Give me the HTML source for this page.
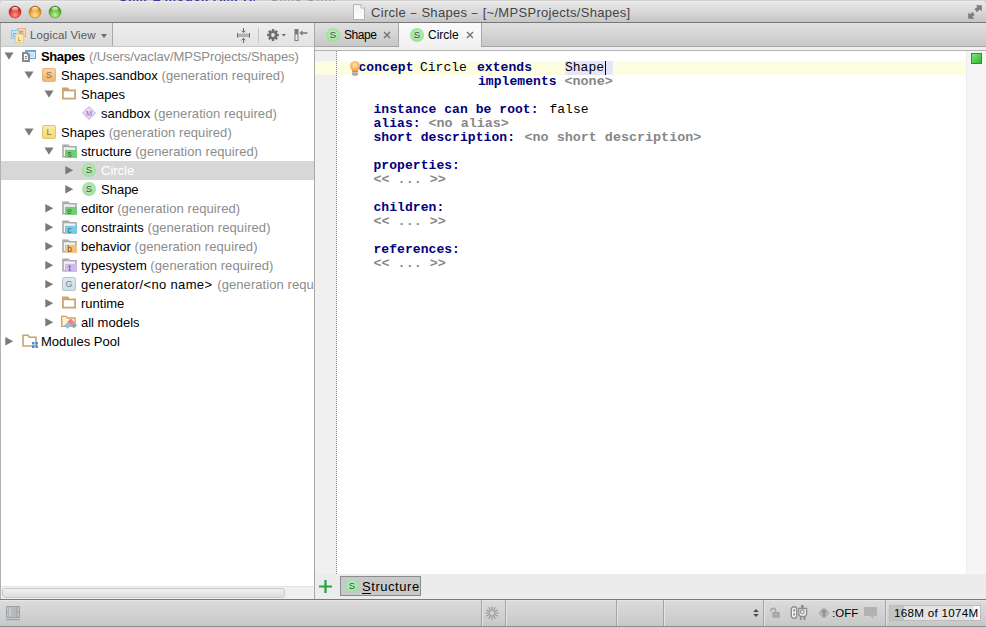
<!DOCTYPE html><html><head><meta charset="utf-8"><style>
*{margin:0;padding:0;box-sizing:border-box}
html,body{width:986px;height:627px;overflow:hidden;background:#fff}
body{position:relative;font-family:"Liberation Sans",sans-serif;font-size:13px;color:#000}
div,span,svg{position:absolute}
.nw{white-space:nowrap}
.g{color:#8c8c8c;letter-spacing:0.08px}
.code{font-family:"Liberation Mono",monospace;font-size:13px;white-space:pre;line-height:14px}
.kw{color:#000080;font-weight:bold;letter-spacing:0.06px}
.gr{color:#878787;font-weight:bold;font-size:13.4px}
.bk{color:#000}
.sc{width:14px;height:14px;border-radius:50%;background:radial-gradient(circle at 50% 45%,#c4f2c4,#95dd98 80%,#86d08a)}
.sc i{position:absolute;left:0;top:0;width:14px;height:14px;line-height:14px;text-align:center;font-style:normal;font-size:9.5px;color:#3e4a3e}
</style></head><body>
<div style="left:0;top:0;width:986px;height:22px;background:linear-gradient(#ebebeb,#d9d9d9 50%,#c6c6c6)"></div>
<div style="left:0;top:22px;width:986px;height:1px;background:#777"></div>
<div style="left:0;top:0;width:986px;height:1px;background:#d0d0d0"></div>
<div style="left:0;top:1px;width:986px;height:1px;background:#eeeeee"></div>
<svg style="left:8px;top:5px" width="14" height="14" viewBox="0 0 14 14"><defs><radialGradient id="tl0" cx="0.5" cy="0.75" r="0.65"><stop offset="0" stop-color="#ff9a90"/><stop offset="0.6" stop-color="#e8463c"/><stop offset="1" stop-color="#a51d14"/></radialGradient><linearGradient id="th0" x1="0" y1="0" x2="0" y2="1"><stop offset="0" stop-color="#fff" stop-opacity="0.95"/><stop offset="1" stop-color="#fff" stop-opacity="0"/></linearGradient></defs><circle cx="7" cy="7" r="6" fill="url(#tl0)" stroke="#a51d14" stroke-width="0.5"/><ellipse cx="7" cy="4.3" rx="3.3" ry="2.2" fill="url(#th0)"/></svg>
<svg style="left:28px;top:5px" width="14" height="14" viewBox="0 0 14 14"><defs><radialGradient id="tl1" cx="0.5" cy="0.75" r="0.65"><stop offset="0" stop-color="#ffe39a"/><stop offset="0.6" stop-color="#f1a935"/><stop offset="1" stop-color="#b36f0c"/></radialGradient><linearGradient id="th1" x1="0" y1="0" x2="0" y2="1"><stop offset="0" stop-color="#fff" stop-opacity="0.95"/><stop offset="1" stop-color="#fff" stop-opacity="0"/></linearGradient></defs><circle cx="7" cy="7" r="6" fill="url(#tl1)" stroke="#b36f0c" stroke-width="0.5"/><ellipse cx="7" cy="4.3" rx="3.3" ry="2.2" fill="url(#th1)"/></svg>
<svg style="left:48px;top:5px" width="14" height="14" viewBox="0 0 14 14"><defs><radialGradient id="tl2" cx="0.5" cy="0.75" r="0.65"><stop offset="0" stop-color="#c8f29a"/><stop offset="0.6" stop-color="#6cc23f"/><stop offset="1" stop-color="#3a8a1c"/></radialGradient><linearGradient id="th2" x1="0" y1="0" x2="0" y2="1"><stop offset="0" stop-color="#fff" stop-opacity="0.95"/><stop offset="1" stop-color="#fff" stop-opacity="0"/></linearGradient></defs><circle cx="7" cy="7" r="6" fill="url(#tl2)" stroke="#3a8a1c" stroke-width="0.5"/><ellipse cx="7" cy="4.3" rx="3.3" ry="2.2" fill="url(#th2)"/></svg>
<svg style="left:0;top:0" width="6" height="6" viewBox="0 0 6 6"><path d="M0 0h6C2.5 0 0 2.5 0 6z" fill="#d4d4d4"/></svg>
<svg style="left:980px;top:0" width="6" height="6" viewBox="0 0 6 6"><path d="M6 0H0c3.5 0 6 2.5 6 6z" fill="#d4d4d4"/></svg>
<div style="left:119px;top:0;width:136px;height:2px;overflow:hidden;opacity:0.85"><div class="nw" style="left:0;top:-11px;font-size:13px;font-weight:bold;color:#20208a;letter-spacing:0.4px">SIMPL modelPAMPHM6</div></div>
<div style="left:270px;top:0;width:70px;height:2px;overflow:hidden;opacity:0.85"><div class="nw" style="left:0;top:-11px;font-size:13px;color:#8a8a8a;letter-spacing:0.8px">Sims SIMPL md6</div></div>
<svg style="left:352px;top:3px" width="14" height="18" viewBox="0 0 14 18"><defs><linearGradient id="dg" x1="0" y1="0" x2="0" y2="1"><stop offset="0" stop-color="#f2f2f2"/><stop offset="1" stop-color="#ffffff"/></linearGradient></defs><path d="M1.5 1.5h7.5l3.5 3.5v11.5h-11z" fill="url(#dg)" stroke="#b4b4b4"/><path d="M9 1.5v3.5h3.5" fill="#fff" stroke="#b4b4b4"/></svg>
<div class="nw" style="left:371px;top:5px;font-size:13px;letter-spacing:0.3px;color:#444">Circle <span style="position:relative;display:inline-block;transform:scaleX(0.78)">–</span> Shapes <span style="position:relative;display:inline-block;transform:scaleX(0.78)">–</span> [~/MPSProjects/Shapes]</div>
<svg style="left:967px;top:4px" width="16" height="16" viewBox="0 0 16 16"><path d="M8.6 1.2h6.2v6.2l-2-2-2.2 2.2c-.8.8-2 .3-1.6-.8l.4-.9-.5.2c-1 .4-1.6-.7-.8-1.5l2.5-1.5z" fill="#7c7c7c"/><path d="M1.2 8.6v6.2h6.2l-2-2 1.8-1.6c.8-.8.2-1.9-.8-1.5l-.6.3.3-.7c.4-1-.7-1.5-1.5-.7L3.2 10.6z" fill="#7c7c7c"/></svg>
<div style="left:0;top:23px;width:1px;height:577px;background:#b2b2b2"></div>
<div style="left:1px;top:23px;width:313px;height:24px;background:linear-gradient(#eeeeee,#e3e3e3);border-bottom:1px solid #c8c8c8"></div>
<div style="left:1px;top:23px;width:111px;height:23px;background:linear-gradient(#e4e4e4,#d9d9d9)"></div>
<div style="left:112px;top:23px;width:1px;height:23px;background:#aaaaaa"></div>
<svg style="left:10px;top:27px" width="17" height="17" viewBox="0 0 17 17"><rect x="7.5" y="1.5" width="8" height="8" fill="#f8d2a8" stroke="#ecb27a"/><text x="11.5" y="7.8" font-size="6" text-anchor="middle" fill="#8a6a4a" font-family="Liberation Sans">S</text><rect x="1.5" y="3.5" width="8" height="8" fill="#c4e4f8" stroke="#8cc6ea"/><text x="5" y="9.5" font-size="6" text-anchor="middle" fill="#6a8aa0" font-family="Liberation Sans">D</text><rect x="5.5" y="7.5" width="8" height="8" fill="#faeab0" stroke="#e8cf7a"/><text x="9.5" y="14" font-size="6" text-anchor="middle" fill="#8a7a4a" font-family="Liberation Sans">L</text></svg>
<div class="nw" style="left:30px;top:29px;color:#5a5a5a;font-size:11.5px;letter-spacing:0.1px">Logical View</div>
<div style="left:101px;top:34px;width:0;height:0;border-left:3.5px solid transparent;border-right:3.5px solid transparent;border-top:4px solid #6a6a6a"></div>
<svg style="left:237px;top:28px" width="13" height="15" viewBox="0 0 13 15"><rect x="0.5" y="5.5" width="12" height="3.6" fill="#b4b4b4"/><path d="M0.5 5v4.6M12.5 5v4.6" stroke="#6a6a6a" stroke-width="1"/><path d="M6.5 0v4.2M6.5 10.4v4.6" stroke="#6a6a6a" stroke-width="1"/><path d="M4.5 2.6l2 2 2-2M4.5 12.4l2-2 2 2" stroke="#6a6a6a" fill="none" stroke-width="1"/></svg>
<div style="left:258px;top:28px;width:1px;height:15px;background:#c4c4c4"></div>
<svg style="left:267px;top:29px" width="20" height="12" viewBox="0 0 20 12"><path d="M10.08 4.65 L11.88 4.81 L11.88 7.19 L10.08 7.35 L9.84 7.93 L11.00 9.32 L9.32 11.00 L7.93 9.84 L7.35 10.08 L7.19 11.88 L4.81 11.88 L4.65 10.08 L4.07 9.84 L2.68 11.00 L1.00 9.32 L2.16 7.93 L1.92 7.35 L0.12 7.19 L0.12 4.81 L1.92 4.65 L2.16 4.07 L1.00 2.68 L2.68 1.00 L4.07 2.16 L4.65 1.92 L4.81 0.12 L7.19 0.12 L7.35 1.92 L7.93 2.16 L9.32 1.00 L11.00 2.68 L9.84 4.07z" fill="#6e6e6e"/><circle cx="6" cy="6" r="1.9" fill="#e6e6e6"/><path d="M14.6 5h4.4l-2.2 2.6z" fill="#6e6e6e"/></svg>
<svg style="left:294px;top:29px" width="14" height="12" viewBox="0 0 14 12"><rect x="1" y="0.5" width="3" height="11" fill="#e8e8e8" stroke="#7a7a7a"/><rect x="1" y="0.5" width="3" height="5" fill="#7a7a7a"/><path d="M5.5 4l3-2.8v2h5v1.6h-5v2z" fill="#777"/></svg>
<div style="left:1px;top:161px;width:313px;height:19px;background:#d7d7d7"></div>
<svg style="left:0px;top:47px" width="18" height="19" viewBox="0 0 18 19"><path d="M4.5 5.5L13.5 5.5L9 12.7z" fill="#7a7a7a"/></svg>
<svg style="left:18px;top:46px" width="24" height="20" viewBox="0 0 24 20"><rect x="7.5" y="4.5" width="10" height="8" fill="#bfe0f6" stroke="#5ea8cf"/><rect x="7" y="4" width="11" height="2" fill="#5ea8cf"/><rect x="8.5" y="6.3" width="8" height="5.2" fill="none" stroke="#e6f4fc" stroke-width="0.8"/><path d="M4 6h5.6L12 8.4V16H4z" fill="#8a8a8a"/><path d="M6 8h3v1.5h1V14H6z" fill="#fff"/><rect x="6.8" y="10" width="2.4" height="1.1" fill="#8a8a8a"/><rect x="6.8" y="12" width="2.4" height="1.1" fill="#8a8a8a"/></svg>
<div class="nw" style="left:41px;top:49px;color:#000;font-weight:bold;letter-spacing:-0.4px">Shapes</div>
<div class="nw g" style="left:89px;top:49px;letter-spacing:-0.1px">(/Users/vaclav/MPSProjects/Shapes)</div>
<svg style="left:20px;top:66px" width="18" height="19" viewBox="0 0 18 19"><path d="M4.5 5.5L13.5 5.5L9 12.7z" fill="#7a7a7a"/></svg>
<div style="left:42px;top:68px;width:14px;height:14px;border-radius:2px;background:linear-gradient(#f8d4a4,#f0b574);border:1px solid #ecb47a"><i style="position:absolute;left:0;top:0;width:12px;text-align:center;font-style:normal;font-size:9px;line-height:12px;color:#8a6a48">S</i></div>
<div class="nw" style="left:61px;top:68px;color:#000;">Shapes.sandbox <span class="g" style="position:static;">(generation required)</span></div>
<svg style="left:40px;top:85px" width="18" height="19" viewBox="0 0 18 19"><path d="M4.5 5.5L13.5 5.5L9 12.7z" fill="#7a7a7a"/></svg>
<svg style="left:62px;top:87px" width="15" height="14" viewBox="0 0 15 14"><path d="M0 0.5h6l1.6 2H14v10H0z" fill="#c9a673"/><rect x="1.8" y="4.3" width="10.4" height="6.4" fill="#fff"/></svg>
<div class="nw" style="left:81px;top:87px;color:#000;">Shapes</div>
<svg style="left:82px;top:106px" width="14" height="14" viewBox="0 0 14 14"><path d="M7 0.5L13.5 7 7 13.5 0.5 7z" fill="#e8d6f8" stroke="#c9a8ee"/><text x="7" y="10" font-size="7.5" text-anchor="middle" fill="#8a70a8" font-family="Liberation Sans">M</text></svg>
<div class="nw" style="left:101px;top:106px;color:#000;">sandbox <span class="g" style="position:static;">(generation required)</span></div>
<svg style="left:20px;top:123px" width="18" height="19" viewBox="0 0 18 19"><path d="M4.5 5.5L13.5 5.5L9 12.7z" fill="#7a7a7a"/></svg>
<div style="left:42px;top:125px;width:14px;height:14px;border-radius:2px;background:linear-gradient(#fbeaa6,#f4d97a);border:1px solid #e3c766"><i style="position:absolute;left:0;top:0;width:12px;text-align:center;font-style:normal;font-size:9px;line-height:12px;color:#8a7a40">L</i></div>
<div class="nw" style="left:61px;top:125px;color:#000;">Shapes <span class="g" style="position:static;">(generation required)</span></div>
<svg style="left:40px;top:142px" width="18" height="19" viewBox="0 0 18 19"><path d="M4.5 5.5L13.5 5.5L9 12.7z" fill="#7a7a7a"/></svg>
<svg style="left:62px;top:144px" width="16" height="15" viewBox="0 0 16 15"><path d="M1 1.2h5.2l1.4 1.6h6.4v10H1z" fill="#f2f2f2" stroke="#aaaaaa" stroke-width="1.6"/><path d="M1 2h5l1 1.2H1z" fill="#aaaaaa"/><rect x="3" y="5.8" width="12" height="8" fill="#6fcf73"/><text x="7.6" y="12.9" font-size="8.5" text-anchor="middle" fill="#4f5f4f" font-family="Liberation Sans">s</text></svg>
<div class="nw" style="left:81px;top:144px;color:#000;">structure <span class="g" style="position:static;">(generation required)</span></div>
<svg style="left:60px;top:161px" width="18" height="19" viewBox="0 0 18 19"><path d="M5.3 5L13.2 9.25L5.3 13.5z" fill="#7a7a7a"/></svg>
<div class="sc" style="left:82px;top:163px"><i>S</i></div>
<div class="nw" style="left:101px;top:163px;color:#fff;">Circle</div>
<svg style="left:60px;top:180px" width="18" height="19" viewBox="0 0 18 19"><path d="M5.3 5L13.2 9.25L5.3 13.5z" fill="#7a7a7a"/></svg>
<div class="sc" style="left:82px;top:182px"><i>S</i></div>
<div class="nw" style="left:101px;top:182px;color:#000;">Shape</div>
<svg style="left:40px;top:199px" width="18" height="19" viewBox="0 0 18 19"><path d="M5.3 5L13.2 9.25L5.3 13.5z" fill="#7a7a7a"/></svg>
<svg style="left:62px;top:201px" width="16" height="15" viewBox="0 0 16 15"><path d="M1 1.2h5.2l1.4 1.6h6.4v10H1z" fill="#f2f2f2" stroke="#aaaaaa" stroke-width="1.6"/><path d="M1 2h5l1 1.2H1z" fill="#aaaaaa"/><rect x="3" y="5.8" width="12" height="8" fill="#6fcf73"/><text x="7.6" y="12.9" font-size="8.5" text-anchor="middle" fill="#4f5f4f" font-family="Liberation Sans">e</text></svg>
<div class="nw" style="left:81px;top:201px;color:#000;">editor <span class="g" style="position:static;">(generation required)</span></div>
<svg style="left:40px;top:218px" width="18" height="19" viewBox="0 0 18 19"><path d="M5.3 5L13.2 9.25L5.3 13.5z" fill="#7a7a7a"/></svg>
<svg style="left:62px;top:220px" width="16" height="15" viewBox="0 0 16 15"><path d="M1 1.2h5.2l1.4 1.6h6.4v10H1z" fill="#f2f2f2" stroke="#aaaaaa" stroke-width="1.6"/><path d="M1 2h5l1 1.2H1z" fill="#aaaaaa"/><rect x="3" y="5.8" width="12" height="8" fill="#72cdea"/><text x="7.6" y="12.9" font-size="8.5" text-anchor="middle" fill="#4f5f4f" font-family="Liberation Sans">c</text></svg>
<div class="nw" style="left:81px;top:220px;color:#000;">constraints <span class="g" style="position:static;">(generation required)</span></div>
<svg style="left:40px;top:237px" width="18" height="19" viewBox="0 0 18 19"><path d="M5.3 5L13.2 9.25L5.3 13.5z" fill="#7a7a7a"/></svg>
<svg style="left:62px;top:239px" width="16" height="15" viewBox="0 0 16 15"><path d="M1 1.2h5.2l1.4 1.6h6.4v10H1z" fill="#f2f2f2" stroke="#aaaaaa" stroke-width="1.6"/><path d="M1 2h5l1 1.2H1z" fill="#aaaaaa"/><rect x="3" y="5.8" width="12" height="8" fill="#f6bf7a"/><text x="7.6" y="12.9" font-size="8.5" text-anchor="middle" fill="#4f5f4f" font-family="Liberation Sans">b</text></svg>
<div class="nw" style="left:81px;top:239px;color:#000;">behavior <span class="g" style="position:static;">(generation required)</span></div>
<svg style="left:40px;top:256px" width="18" height="19" viewBox="0 0 18 19"><path d="M5.3 5L13.2 9.25L5.3 13.5z" fill="#7a7a7a"/></svg>
<svg style="left:62px;top:258px" width="16" height="15" viewBox="0 0 16 15"><path d="M1 1.2h5.2l1.4 1.6h6.4v10H1z" fill="#f2f2f2" stroke="#aaaaaa" stroke-width="1.6"/><path d="M1 2h5l1 1.2H1z" fill="#aaaaaa"/><rect x="3" y="5.8" width="12" height="8" fill="#d2b8ee"/><text x="7.6" y="12.9" font-size="8.5" text-anchor="middle" fill="#4f5f4f" font-family="Liberation Sans">t</text></svg>
<div class="nw" style="left:81px;top:258px;color:#000;">typesystem <span class="g" style="position:static;">(generation required)</span></div>
<svg style="left:40px;top:275px" width="18" height="19" viewBox="0 0 18 19"><path d="M5.3 5L13.2 9.25L5.3 13.5z" fill="#7a7a7a"/></svg>
<div style="left:62px;top:277px;width:14px;height:14px;border-radius:2px;background:linear-gradient(#dde9f0,#cfdee8);border:1px solid #b2c6d2"><i style="position:absolute;left:0;top:0;width:12px;text-align:center;font-style:normal;font-size:9px;line-height:12px;color:#6e7e88">G</i></div>
<div class="nw" style="left:81px;top:277px;color:#000;letter-spacing:0.33px;">generator/&lt;no name&gt; <span class="g" style="position:static;margin-left:1px;">(generation required)</span></div>
<svg style="left:40px;top:294px" width="18" height="19" viewBox="0 0 18 19"><path d="M5.3 5L13.2 9.25L5.3 13.5z" fill="#7a7a7a"/></svg>
<svg style="left:62px;top:296px" width="15" height="14" viewBox="0 0 15 14"><path d="M0 0.5h6l1.6 2H14v10H0z" fill="#c9a673"/><rect x="1.8" y="4.3" width="10.4" height="6.4" fill="#fff"/></svg>
<div class="nw" style="left:81px;top:296px;color:#000;">runtime</div>
<svg style="left:40px;top:313px" width="18" height="19" viewBox="0 0 18 19"><path d="M5.3 5L13.2 9.25L5.3 13.5z" fill="#7a7a7a"/></svg>
<svg style="left:60px;top:315px" width="18" height="16" viewBox="0 0 18 16"><path d="M1.7 1.4h4.6l1.4 1.6h7.4v8.4H1.7z" fill="#fdf2c8" stroke="#c9a673" stroke-width="1.4"/><path d="M10.7 3.4l3.4 3.4-3.4 3.4-3.4-3.4z" fill="#f07898"/><path d="M7.5 7.2l3.4 3.4-3.4 3.4-3.4-3.4z" fill="#7cc4f0"/><path d="M13.9 7.1l3.2 3.2-3.2 3.2-3.2-3.2z" fill="#9aa4ae"/></svg>
<div class="nw" style="left:81px;top:315px;color:#000;">all models</div>
<svg style="left:0px;top:332px" width="18" height="19" viewBox="0 0 18 19"><path d="M5.3 5L13.2 9.25L5.3 13.5z" fill="#7a7a7a"/></svg>
<svg style="left:22px;top:334px" width="17" height="14" viewBox="0 0 17 14"><path d="M1 1.2h5l1.5 2h6.5v8.8h-13z" fill="#fff" stroke="#c8a46e" stroke-width="1.6"/><rect x="10" y="8" width="2.5" height="2.5" fill="#4a90d0"/><rect x="13.5" y="8" width="2.5" height="2.5" fill="#4a90d0"/><rect x="10" y="11.5" width="2.5" height="2.5" fill="#4a90d0"/><rect x="13.5" y="11.5" width="2.5" height="2.5" fill="#4a90d0"/></svg>
<div class="nw" style="left:41px;top:334px;color:#000;">Modules Pool</div>
<div style="left:314px;top:23px;width:1px;height:577px;background:#a8a8a8"></div>
<div style="left:1px;top:586px;width:313px;height:13px;background:#f0f0f0;border-top:1px solid #e4e4e4"></div>
<div style="left:2px;top:588px;width:283px;height:10px;border-radius:3px;background:linear-gradient(#f0f0f0,#dedede);border:1px solid #cacaca"></div>
<div style="left:315px;top:23px;width:671px;height:24px;background:linear-gradient(#e0e0e0,#c8c8c8);border-bottom:1px solid #a4a4a4"></div>
<div style="left:315px;top:47px;width:671px;height:3px;background:#f0f0f0"></div>
<div style="left:315px;top:50px;width:671px;height:1px;background:#b4b4b4"></div>
<div style="left:398px;top:23px;width:1px;height:24px;background:#a8a8a8"></div>
<div class="sc" style="left:326px;top:28px"><i>S</i></div>
<div class="nw" style="left:344px;top:27.5px;font-size:12px;letter-spacing:-0.45px">Shape</div>
<svg style="left:383px;top:31px" width="8" height="8" viewBox="0 0 8 8"><path d="M1 1L7 7M7 1L1 7" stroke="#717171" stroke-width="1.4"/></svg>
<div style="left:399px;top:23px;width:82px;height:27px;background:linear-gradient(#fafafa,#f0f0f0)"></div>
<div style="left:481px;top:23px;width:1px;height:24px;background:#a8a8a8"></div>
<div class="sc" style="left:410px;top:28px"><i>S</i></div>
<div class="nw" style="left:428px;top:27.5px;font-size:12px">Circle</div>
<svg style="left:466px;top:31px" width="8" height="8" viewBox="0 0 8 8"><path d="M1 1L7 7M7 1L1 7" stroke="#717171" stroke-width="1.4"/></svg>
<div style="left:315px;top:51px;width:671px;height:523px;background:#fff"></div>
<div style="left:315px;top:51px;width:22px;height:523px;background:#f0f0f0"></div>
<div style="left:336px;top:51px;width:1px;height:523px;background:repeating-linear-gradient(#8e8e8e 0 1px,transparent 1px 2px)"></div>
<div style="left:966px;top:51px;width:20px;height:523px;background:#f5f5f5;border-left:1px solid #ececec"></div>
<div style="left:315px;top:61px;width:21px;height:14px;background:#fdfde0"></div>
<div style="left:337px;top:61px;width:629px;height:14px;background:#fdfde0"></div>
<div style="left:971px;top:53px;width:11px;height:11px;background:linear-gradient(135deg,#7ee87e,#2cb42c);border:1px solid #209a20"></div>
<div style="left:565px;top:61px;width:48px;height:14px;background:#e6e6f8"></div>
<div class="code kw" style="left:358.5px;top:61px">concept</div>
<div class="code bk" style="left:420px;top:61px">Circle</div>
<div class="code kw" style="left:477px;top:61px">extends</div>
<div class="code bk" style="left:565px;top:61px">Shape</div>
<div class="code kw" style="left:478px;top:75px">implements</div>
<div class="code gr" style="left:564.5px;top:75px">&lt;none&gt;</div>
<div class="code kw" style="left:373.5px;top:103px">instance can be root:</div>
<div class="code bk" style="left:549.5px;top:103px">false</div>
<div class="code kw" style="left:373.5px;top:117px">alias:</div>
<div class="code gr" style="left:428.5px;top:117px">&lt;no alias&gt;</div>
<div class="code kw" style="left:373.5px;top:131px">short description:</div>
<div class="code gr" style="left:524.5px;top:131px">&lt;no short description&gt;</div>
<div class="code kw" style="left:373.5px;top:159px">properties:</div>
<div class="code gr" style="left:373.5px;top:173px">&lt;&lt; ... &gt;&gt;</div>
<div class="code kw" style="left:373.5px;top:201px">children:</div>
<div class="code gr" style="left:373.5px;top:215px">&lt;&lt; ... &gt;&gt;</div>
<div class="code kw" style="left:373.5px;top:243px">references:</div>
<div class="code gr" style="left:373.5px;top:257px">&lt;&lt; ... &gt;&gt;</div>
<div style="left:605px;top:61px;width:1px;height:14px;background:#000"></div>
<svg style="left:349px;top:60px" width="12" height="16" viewBox="0 0 12 16"><defs><radialGradient id="bg1" cx="0.45" cy="0.35" r="0.7"><stop offset="0" stop-color="#ffd9a0"/><stop offset="0.6" stop-color="#f8b45e"/><stop offset="1" stop-color="#ee9a3a"/></radialGradient></defs><path d="M6 1A5 5 0 0 1 11 6c0 2-1.3 3-2 4.2V11H3v-.8C2.3 9 1 8 1 6A5 5 0 0 1 6 1z" fill="url(#bg1)"/><path d="M4 5l1 3M8 5l-1 3M4 5h4" stroke="#ffe6c0" stroke-width="0.6" fill="none"/><rect x="3" y="11" width="6" height="4" fill="#9a9a9a"/><path d="M3 12.5h6M3 14h6" stroke="#d8d8d8" stroke-width="0.6"/><rect x="4" y="15" width="4" height="1" fill="#b8b8b8"/></svg>
<div style="left:315px;top:574px;width:671px;height:25px;background:#ececec"></div>
<svg style="left:319px;top:580px" width="13" height="13" viewBox="0 0 13 13"><path d="M6.5 0v13M0 6.5h13" stroke="#2aa040" stroke-width="2.2"/></svg>
<div style="left:340px;top:576px;width:81px;height:20px;background:#c9c9c9;border:1px solid #8c8c8c"></div>
<div class="sc" style="left:345px;top:579px"><i>S</i></div>
<div class="nw" style="left:362px;top:579px;letter-spacing:0.55px">Structure</div>
<div style="left:362px;top:593px;width:9px;height:1px;background:#000"></div>
<div style="left:0;top:599px;width:986px;height:1px;background:#7a7a7a"></div>
<div style="left:0;top:600px;width:986px;height:26px;background:linear-gradient(#dcdcdc,#c8c8c8)"></div>
<div style="left:0;top:626px;width:986px;height:1px;background:#8c8c8c"></div>
<div style="left:0;top:600px;width:986px;height:1px;background:#e6e6e6"></div>
<div style="left:481px;top:600px;width:1px;height:26px;background:#a4a4a4"></div>
<div style="left:482px;top:601px;width:1px;height:25px;background:#e4e4e4"></div>
<div style="left:505px;top:600px;width:1px;height:26px;background:#a4a4a4"></div>
<div style="left:506px;top:601px;width:1px;height:25px;background:#e4e4e4"></div>
<div style="left:616px;top:600px;width:1px;height:26px;background:#a4a4a4"></div>
<div style="left:617px;top:601px;width:1px;height:25px;background:#e4e4e4"></div>
<div style="left:663px;top:600px;width:1px;height:26px;background:#a4a4a4"></div>
<div style="left:664px;top:601px;width:1px;height:25px;background:#e4e4e4"></div>
<div style="left:763px;top:600px;width:1px;height:26px;background:#a4a4a4"></div>
<div style="left:764px;top:601px;width:1px;height:25px;background:#e4e4e4"></div>
<div style="left:885px;top:600px;width:1px;height:26px;background:#a4a4a4"></div>
<div style="left:886px;top:601px;width:1px;height:25px;background:#e4e4e4"></div>
<svg style="left:6px;top:606px" width="14" height="15" viewBox="0 0 14 15"><rect x="0.5" y="0.5" width="13" height="11" fill="#c4c8cc" stroke="#9aa0a6"/><rect x="3" y="1" width="8" height="10" fill="#b6babe"/><path d="M3 1v10M11 1v10M1 6h2M11 6h2" stroke="#9aa0a6"/><rect x="3.5" y="1.5" width="1" height="9" fill="#e4e6e8"/><rect x="0" y="13" width="14" height="1.2" fill="#9aa0a6"/></svg>
<svg style="left:485px;top:606px" width="14" height="14" viewBox="0 0 14 14"><path d="M9.60 7.00L13.20 7.00M9.25 8.30L12.37 10.10M8.30 9.25L10.10 12.37M7.00 9.60L7.00 13.20M5.70 9.25L3.90 12.37M4.75 8.30L1.63 10.10M4.40 7.00L0.80 7.00M4.75 5.70L1.63 3.90M5.70 4.75L3.90 1.63M7.00 4.40L7.00 0.80M8.30 4.75L10.10 1.63M9.25 5.70L12.37 3.90" stroke="#969696" stroke-width="1.1" stroke-linecap="round"/></svg>
<svg style="left:752px;top:608px" width="8" height="10" viewBox="0 0 8 10"><path d="M1.2 4L4 1 6.8 4z M1.2 6L4 9 6.8 6z" fill="#4a4a4a"/></svg>
<svg style="left:769px;top:607px" width="12" height="12" viewBox="0 0 12 12"><path d="M2 4.5V3.5a2.3 2.3 0 0 1 4.6 0V5" fill="none" stroke="#a6a6a6" stroke-width="1.5"/><rect x="3.3" y="5" width="7.5" height="5.8" rx="1" fill="#a6a6a6"/><path d="M6 7.5h2.2" stroke="#c8c8c8" stroke-width="1"/></svg>
<svg style="left:790px;top:605px" width="18" height="15" viewBox="0 0 18 15"><rect x="1.3" y="1.8" width="5.4" height="11.6" rx="2.7" fill="#f2f2f2" stroke="#8c8c8c" stroke-width="1.4"/><rect x="3.2" y="4.3" width="1.8" height="2.2" fill="#8c8c8c"/><rect x="3.2" y="8.3" width="1.8" height="2.2" fill="#8c8c8c"/><rect x="11" y="0" width="2.6" height="3.4" fill="#8c8c8c"/><path d="M8.8 3.3h7.8v6.2l-1.6 2H10.4l-1.6-2z" fill="#eeeeee" stroke="#8c8c8c" stroke-width="1.3"/><circle cx="12.3" cy="6.8" r="1.9" fill="none" stroke="#8c8c8c" stroke-width="1.1"/><rect x="9.8" y="11.4" width="1.8" height="3.6" fill="#8c8c8c"/><rect x="13.6" y="11.4" width="1.8" height="3.6" fill="#8c8c8c"/></svg>
<svg style="left:816px;top:605px" width="16" height="16" viewBox="0 0 16 16"><path d="M8 1L15 8 8 15 1 8z" fill="#c4c4c4" stroke="#e0e0e0" stroke-width="0.8"/><circle cx="8" cy="8" r="4.2" fill="#b4b4b4" stroke="#a4a4a4" stroke-width="0.6"/><path d="M5.9 5.4h4.2v1.4H8.7v4.4H7.3V6.8H5.9z" fill="#7e7e7e"/></svg>
<div class="nw" style="left:832px;top:606px;font-size:11.5px;letter-spacing:0px;top:607px">:OFF</div>
<svg style="left:864px;top:607px" width="13" height="12" viewBox="0 0 13 12"><path d="M1 0h11a1 1 0 0 1 1 1v7a1 1 0 0 1-1 1H9l1 3-4-3H1a1 1 0 0 1-1-1V1a1 1 0 0 1 1-1z" fill="#b2b2b2"/></svg>
<div style="left:889px;top:605px;width:92px;height:16px;background:#e4e4e4;border:1px solid #bcbcbc"></div>
<div style="left:890px;top:606px;width:14px;height:14px;background:#c4c4c4"></div>
<div style="left:974px;top:606px;width:6px;height:14px;background:#fafafa"></div>
<div class="nw" style="left:894px;top:606px;font-size:11.6px;letter-spacing:0.3px">168M of 1074M</div>
</body></html>
